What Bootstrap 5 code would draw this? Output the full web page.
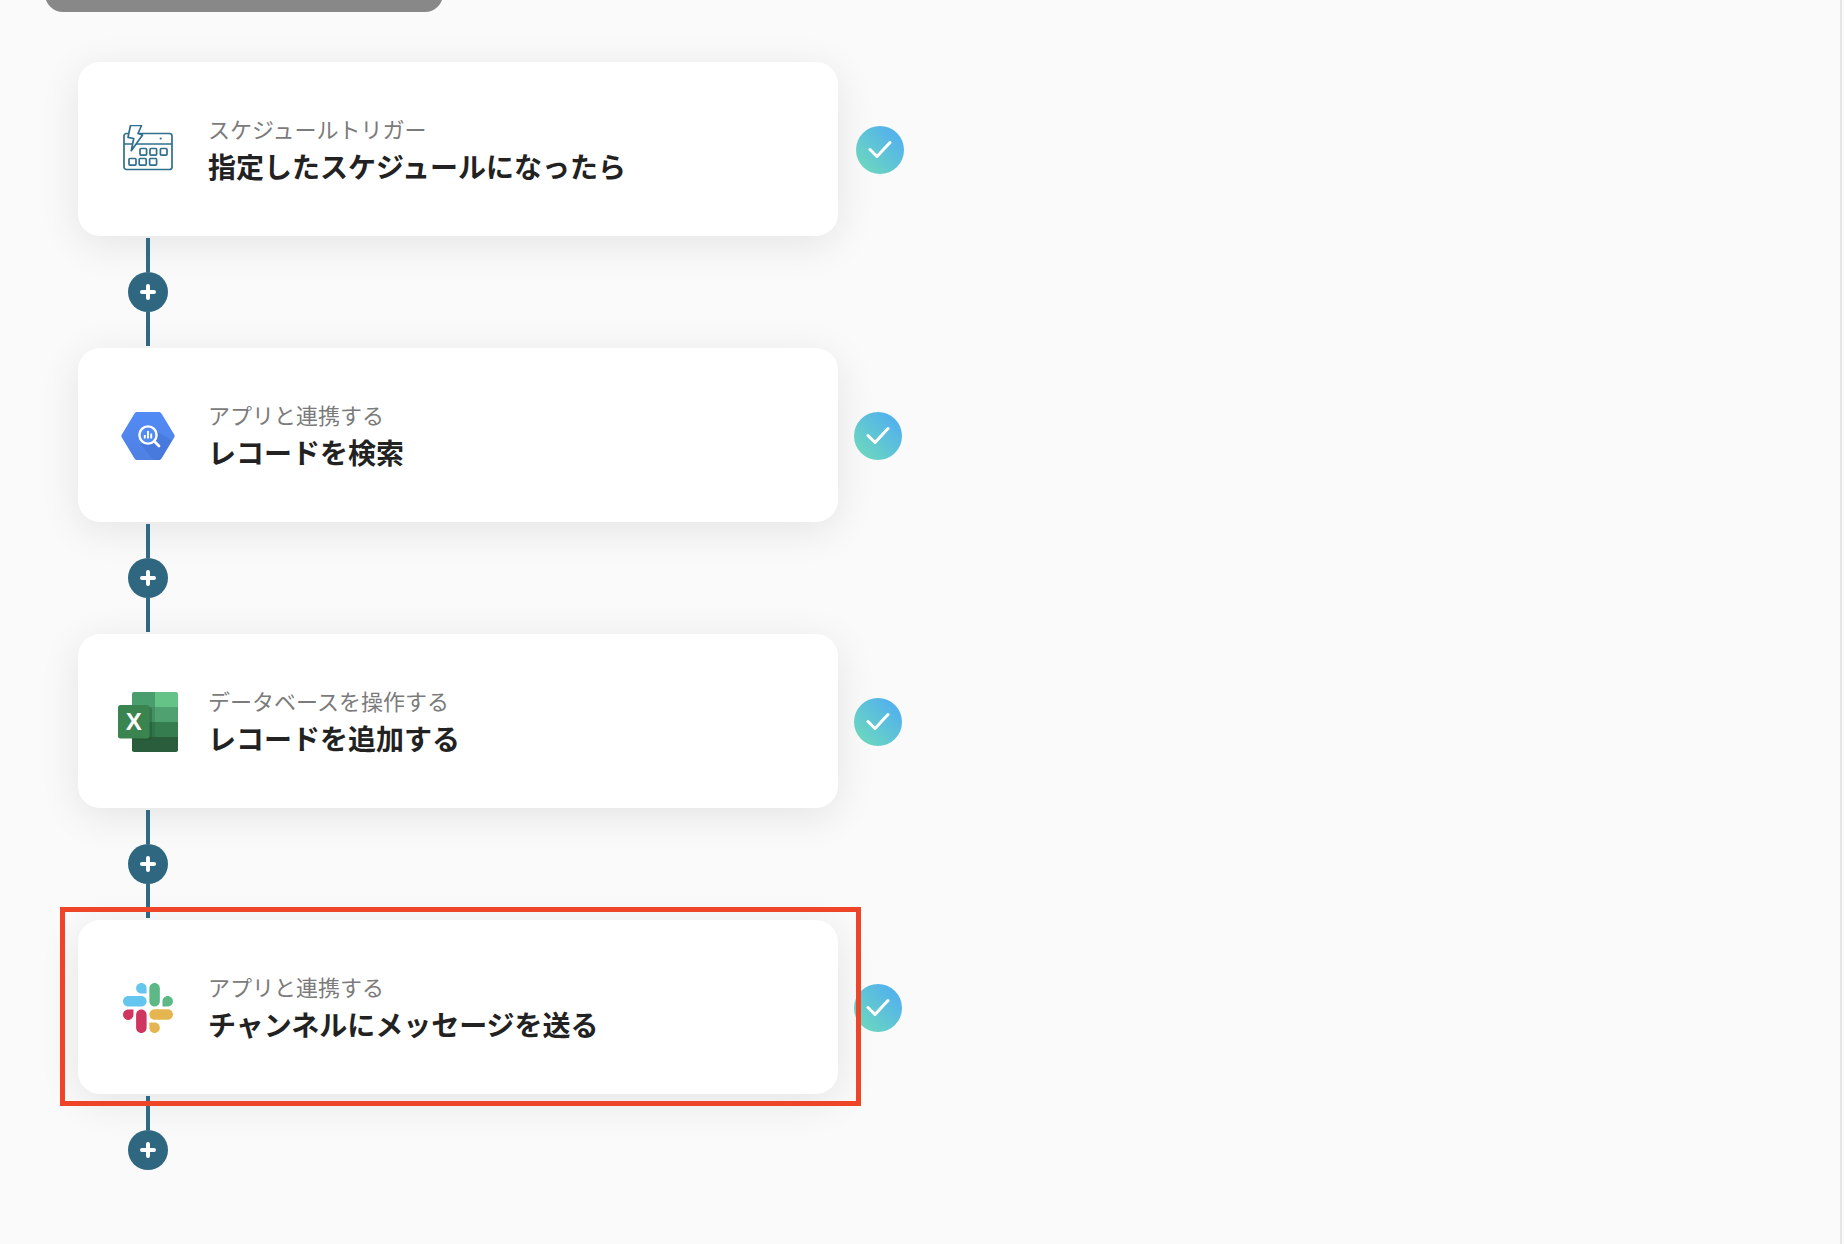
<!DOCTYPE html>
<html lang="ja">
<head>
  <meta charset="UTF-8" />
  <meta name="viewport" content="width=device-width, initial-scale=1">
  <title>フローボット</title>
  <link href="https://cdn.jsdelivr.net/npm/bootstrap@5.3.0/dist/css/bootstrap.min.css" rel="stylesheet"/>
  <style>
    html, body {
      height: 100%;
    }
    body {
      background-color: #fafafa;
      overflow: hidden;
      font-family: "Noto Sans CJK JP", "Noto Sans", sans-serif;
    }
    .page-wrap {
      position: relative;
      height: 1244px;
    }
    .scroll-edge {
      width: 2px;
      margin-right: 2px;
      background-color: #e5e5e5;
    }
    .top-tab {
      width: 398px;
      height: 36px;
      margin-top: -24px;
      margin-left: 45px;
      margin-bottom: 50px;
      background-color: #888;
      border-radius: 24px;
    }
    .flow-card {
      width: 760px;
      height: 174px;
      margin-left: 78px;
      padding-left: 40px;
      border-radius: 22px;
      background-color: #fff;
      box-shadow: 0 8px 40px rgba(0, 0, 0, .09);
    }
    .app-icon {
      width: 60px;
      margin-right: 30px;
      margin-top: 2px;
    }
    .calendar-ico {
      margin-top: -4px;
    }
    .step-kind {
      font-size: 22px;
      line-height: 32px;
      padding-bottom: 2px;
      color: #7b7b7b;
    }
    .step-title {
      font-size: 28px;
      line-height: 40px;
      font-weight: 700;
      color: #222;
    }
    .text-block {
      margin-bottom: 1px;
    }
    .done-mark {
      width: 48px;
      height: 48px;
      margin-left: 16px;
      margin-top: 2px;
      background: linear-gradient(45deg, #6dd8bd 10%, #54b4ea 80%);
    }
    .done-mark.first-mark {
      margin-left: 18px;
    }
    .joiner {
      width: 40px;
      margin: 2px 0 2px 128px;
    }
    .joiner-line {
      width: 4px;
      height: 34px;
      background-color: #2f6a85;
    }
    .add-btn {
      width: 40px;
      height: 40px;
      background-color: #2f6781;
    }
    .red-frame {
      position: absolute;
      left: 60px;
      top: 907px;
      width: 801px;
      height: 199px;
      border: 5px solid #ee4428;
    }
  </style>
</head>
<body>
  <div class="page-wrap d-flex">
    <div class="flex-grow-1">
      <div class="top-tab"></div>

      <div class="d-flex align-items-center">
        <div class="flow-card d-flex align-items-center">
          <div class="app-icon d-flex justify-content-center">
            <svg class="calendar-ico" width="50" height="46" viewBox="0 0 50 46" fill="none" stroke="#2f6f8c" stroke-width="1.7" stroke-linejoin="round">
              <rect x="1" y="8.5" width="48" height="36" rx="2.5"/>
              <path d="M1 19H49"/>
              <circle cx="37.7" cy="13.5" r="1.1" fill="#2f6f8c" stroke="none"/>
              <rect x="17" y="23.5" width="6.6" height="6.6" rx="1"/>
              <rect x="27" y="23.5" width="6.6" height="6.6" rx="1"/>
              <rect x="37.4" y="23.5" width="6.6" height="6.6" rx="1"/>
              <rect x="6" y="33.5" width="7" height="6.6" rx="1"/>
              <rect x="16.2" y="33.5" width="7" height="6.6" rx="1"/>
              <rect x="26.6" y="33.5" width="7" height="6.6" rx="1"/>
              <path d="M7.5 .5H18.5L15 8.5 19.500 10 8.300 25.700 10.700 13.500 5 12.300Z" fill="#fff"/>
            </svg>
          </div>
          <div class="text-block">
            <div class="step-kind">スケジュールトリガー</div>
            <div class="step-title">指定したスケジュールになったら</div>
          </div>
        </div>
        <div class="done-mark first-mark rounded-circle d-flex align-items-center justify-content-center">
          <svg width="24" height="20" viewBox="0 0 24 20" fill="none" stroke="#fff" stroke-width="3" stroke-linecap="round" stroke-linejoin="round"><path d="M2 9.5 9 16.5 22 2.5"/></svg>
        </div>
      </div>

      <div class="joiner d-flex flex-column align-items-center">
        <div class="joiner-line"></div>
        <div class="add-btn rounded-circle d-flex align-items-center justify-content-center">
          <svg width="16" height="16" viewBox="0 0 16 16" stroke="#fff" stroke-width="4" stroke-linecap="round"><path d="M8 2V14M2 8H14"/></svg>
        </div>
        <div class="joiner-line"></div>
      </div>

      <div class="d-flex align-items-center">
        <div class="flow-card d-flex align-items-center">
          <div class="app-icon d-flex justify-content-center">
            <svg width="54" height="48" viewBox="0 0 54 48">
              <defs>
                <linearGradient id="bqFill" x1="0" y1="0" x2="0" y2="1">
                  <stop offset="0" stop-color="#528bf5"/>
                  <stop offset="1" stop-color="#4f80e3"/>
                </linearGradient>
              </defs>
              <path d="M13.500 1.500C14 .7 14.800 0 16 0H38C39.200 0 40 .7 40.500 1.500L53.300 22.700C53.800 23.500 53.800 24.500 53.300 25.300L40.500 46.500C40 47.300 39.200 48 38 48H16C14.800 48 14 47.300 13.500 46.500L.7 25.300C.2 24.500 .2 23.500 .7 22.700Z" fill="url(#bqFill)"/>
              <path d="M33 18 51 28.500 40 46.500C39.500 47.400 39 48 38 48H33L20 33Z" fill="#3f6fd0" opacity=".45"/>
              <circle cx="27" cy="23" r="8.600" fill="#528bf5" stroke="#fff" stroke-width="2.400"/>
              <path d="M33.500 29.500 38 34" stroke="#fff" stroke-width="2.800" stroke-linecap="round"/>
              <path d="M23.800 23V26.500M27 19V26.500M30.200 21.500V26.500" stroke="#fff" stroke-width="1.900"/>
            </svg>
          </div>
          <div class="text-block">
            <div class="step-kind">アプリと連携する</div>
            <div class="step-title">レコードを検索</div>
          </div>
        </div>
        <div class="done-mark rounded-circle d-flex align-items-center justify-content-center">
          <svg width="24" height="20" viewBox="0 0 24 20" fill="none" stroke="#fff" stroke-width="3" stroke-linecap="round" stroke-linejoin="round"><path d="M2 9.5 9 16.5 22 2.5"/></svg>
        </div>
      </div>

      <div class="joiner d-flex flex-column align-items-center">
        <div class="joiner-line"></div>
        <div class="add-btn rounded-circle d-flex align-items-center justify-content-center">
          <svg width="16" height="16" viewBox="0 0 16 16" stroke="#fff" stroke-width="4" stroke-linecap="round"><path d="M8 2V14M2 8H14"/></svg>
        </div>
        <div class="joiner-line"></div>
      </div>

      <div class="d-flex align-items-center">
        <div class="flow-card d-flex align-items-center">
          <div class="app-icon">
            <svg class="d-block" width="60" height="60" viewBox="0 0 60 60">
              <path d="M16 0H37V15H14V2C14 .9 14.900 0 16 0Z" fill="#4a9d6c"/>
              <path d="M37 0H58C59.100 0 60 .9 60 2V15H37Z" fill="#66c387"/>
              <rect x="14" y="15" width="23" height="15" fill="#439062"/>
              <rect x="37" y="15" width="23" height="15" fill="#4fa26f"/>
              <rect x="14" y="30" width="23" height="15" fill="#2f7448"/>
              <rect x="37" y="30" width="23" height="15" fill="#357c4e"/>
              <path d="M14 45H60V58C60 59.100 59.100 60 58 60H16C14.900 60 14 59.100 14 58Z" fill="#2a5d3b"/>
              <rect x="14" y="15" width="20" height="33" rx="2" fill="#1d4a2c" opacity=".35"/>
              <rect x="0" y="13" width="31.500" height="33.500" rx="2.500" fill="#3a8450"/>
              <text x="15.700" y="38" text-anchor="middle" font-family="Liberation Sans, sans-serif" font-size="24" font-weight="700" fill="#fff">X</text>
            </svg>
          </div>
          <div class="text-block">
            <div class="step-kind">データベースを操作する</div>
            <div class="step-title">レコードを追加する</div>
          </div>
        </div>
        <div class="done-mark rounded-circle d-flex align-items-center justify-content-center">
          <svg width="24" height="20" viewBox="0 0 24 20" fill="none" stroke="#fff" stroke-width="3" stroke-linecap="round" stroke-linejoin="round"><path d="M2 9.5 9 16.5 22 2.5"/></svg>
        </div>
      </div>

      <div class="joiner d-flex flex-column align-items-center">
        <div class="joiner-line"></div>
        <div class="add-btn rounded-circle d-flex align-items-center justify-content-center">
          <svg width="16" height="16" viewBox="0 0 16 16" stroke="#fff" stroke-width="4" stroke-linecap="round"><path d="M8 2V14M2 8H14"/></svg>
        </div>
        <div class="joiner-line"></div>
      </div>

      <div class="d-flex align-items-center">
        <div class="flow-card d-flex align-items-center">
          <div class="app-icon d-flex justify-content-center">
            <svg width="50" height="50" viewBox="0 0 124 124">
              <path fill="#cf3560" d="M26 78.600c0 7.200-5.800 13-13 13S0 85.800 0 78.600s5.800-13 13-13h13v13zm6.500 0c0-7.200 5.800-13 13-13s13 5.800 13 13v32.400c0 7.200-5.800 13-13 13s-13-5.800-13-13V78.600z"/>
              <path fill="#64c5ef" d="M45.500 26c-7.200 0-13-5.800-13-13s5.800-13 13-13 13 5.800 13 13v13h-13zm0 6.500c7.200 0 13 5.800 13 13s-5.800 13-13 13H13c-7.200 0-13-5.800-13-13s5.800-13 13-13h32.500z"/>
              <path fill="#5cb985" d="M97.900 45.500c0-7.200 5.800-13 13-13s13 5.800 13 13-5.800 13-13 13h-13v-13zm-6.500 0c0 7.200-5.800 13-13 13s-13-5.800-13-13V13c0-7.200 5.800-13 13-13s13 5.800 13 13v32.500z"/>
              <path fill="#e5b54f" d="M78.400 97.900c7.200 0 13 5.800 13 13s-5.800 13-13 13-13-5.800-13-13v-13h13zm0-6.500c-7.200 0-13-5.800-13-13s5.800-13 13-13h32.500c7.200 0 13 5.800 13 13s-5.800 13-13 13H78.400z"/>
            </svg>
          </div>
          <div class="text-block">
            <div class="step-kind">アプリと連携する</div>
            <div class="step-title">チャンネルにメッセージを送る</div>
          </div>
        </div>
        <div class="done-mark rounded-circle d-flex align-items-center justify-content-center">
          <svg width="24" height="20" viewBox="0 0 24 20" fill="none" stroke="#fff" stroke-width="3" stroke-linecap="round" stroke-linejoin="round"><path d="M2 9.5 9 16.5 22 2.5"/></svg>
        </div>
      </div>

      <div class="joiner d-flex flex-column align-items-center">
        <div class="joiner-line"></div>
        <div class="add-btn rounded-circle d-flex align-items-center justify-content-center">
          <svg width="16" height="16" viewBox="0 0 16 16" stroke="#fff" stroke-width="4" stroke-linecap="round"><path d="M8 2V14M2 8H14"/></svg>
        </div>
      </div>
    </div>
    <div class="scroll-edge"></div>
    <div class="red-frame"></div>
  </div>

  <script src="https://cdn.jsdelivr.net/npm/bootstrap@5.3.0/dist/js/bootstrap.bundle.min.js"></script>
</body>
</html>
